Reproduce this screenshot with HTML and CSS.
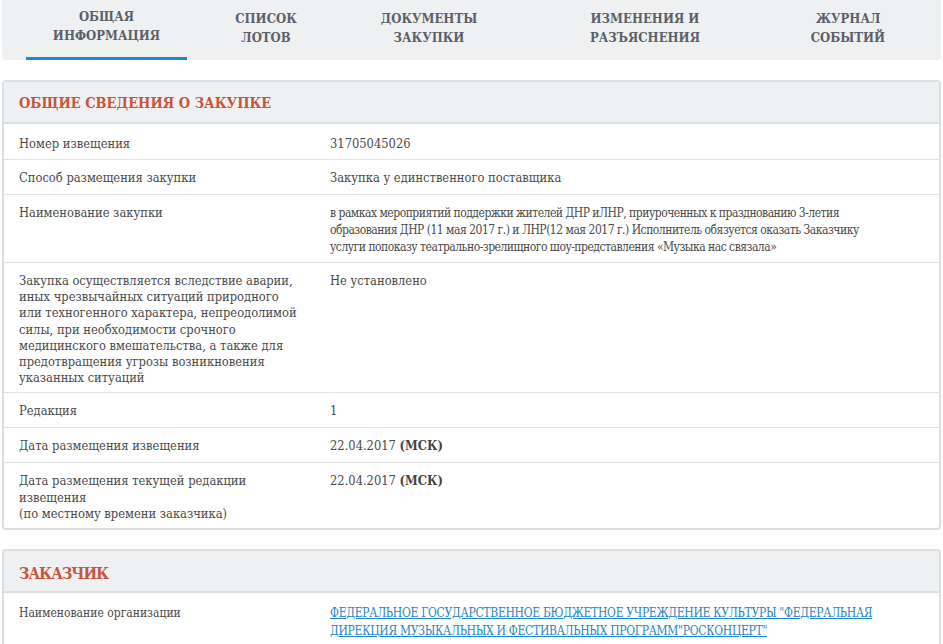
FILE: index.html
```html
<!DOCTYPE html>
<html lang="ru">
<head>
    <meta charset="UTF-8">
    <title>Общая информация о закупке</title>
    <link rel="stylesheet" href="styles.css">
</head>
<body>

    <!-- Вкладки -->
    <div class="tabs">
        <a class="tab active" href="#">Общая<br>информация</a>
        <a class="tab" href="#">Список<br>лотов</a>
        <a class="tab" href="#">Документы<br>закупки</a>
        <a class="tab" href="#">Изменения и<br>разъяснения</a>
        <a class="tab" href="#">Журнал<br>событий</a>
    </div>

    <div class="card">
        <h2 class="card-title">Общие сведения о закупке</h2>
        <div class="row">
            <div class="label">Номер извещения</div>
            <div class="value">31705045026</div>
        </div>
        <div class="row">
            <div class="label">Способ размещения закупки</div>
            <div class="value">Закупка у единственного поставщика</div>
        </div>
        <div class="row">
            <div class="label">Наименование закупки</div>
            <div class="value long">в рамках мероприятий поддержки жителей ДНР иЛНР, приуроченных к празднованию 3&#8209;летия<br>образования ДНР (11 мая 2017 г.) и ЛНР(12 мая 2017 г.) Исполнитель обязуется оказать Заказчику<br>услуги попоказу театрально-зрелищного шоу-представления «Музыка нас связала»</div>
        </div>
        <div class="row">
            <div class="label">Закупка осуществляется вследствие аварии,<br>иных чрезвычайных ситуаций природного<br>или техногенного характера, непреодолимой<br>силы, при необходимости срочного<br>медицинского вмешательства, а также для<br>предотвращения угрозы возникновения<br>указанных ситуаций</div>
            <div class="value">Не установлено</div>
        </div>
        <div class="row">
            <div class="label">Редакция</div>
            <div class="value">1</div>
        </div>
        <div class="row">
            <div class="label">Дата размещения извещения</div>
            <div class="value">22.04.2017 <b>(МСК)</b></div>
        </div>
        <div class="row">
            <div class="label">Дата размещения текущей редакции<br>извещения<br>(по местному времени заказчика)</div>
            <div class="value">22.04.2017 <b>(МСК)</b></div>
        </div>
    </div>

    <div class="card">
        <h2 class="card-title narrow">Заказчик</h2>
        <div class="row narrow">
            <div class="label">Наименование организации</div>
            <div class="value"><a href="#">ФЕДЕРАЛЬНОЕ ГОСУДАРСТВЕННОЕ БЮДЖЕТНОЕ УЧРЕЖДЕНИЕ КУЛЬТУРЫ "ФЕДЕРАЛЬНАЯ<br>ДИРЕКЦИЯ МУЗЫКАЛЬНЫХ И ФЕСТИВАЛЬНЫХ ПРОГРАММ"РОСКОНЦЕРТ"</a></div>
        </div>
    </div>

</body>
</html>
```

FILE: styles.css
```css
body {
    margin: 0;
    padding: 0 2px;
    font-family: "DejaVu Serif Condensed", "DejaVu Serif", serif;
    font-size: 12.8px;
    color: #4a4a4a;
    background: #fff;
}

.tabs {
    display: flex;
    background-color: #eef0f2;
    height: 60px;
    padding-left: 24px;
    border-radius: 0 0 4px 4px;
}

.tab {
    display: flex;
    align-items: center;
    justify-content: center;
    text-align: center;
    height: 55px;
    padding-bottom: 5px;
    text-transform: uppercase;
    text-decoration: none;
    font-weight: bold;
    font-size: 13px;
    line-height: 19px;
    color: #5b6068;
}

.tab:nth-child(1) { width: 161px; }
.tab:nth-child(2) { width: 158px; }
.tab:nth-child(3) { width: 168px; }
.tab:nth-child(4) { width: 264px; }
.tab:nth-child(5) { width: 142px; }

.tab.active {
    height: 52px;
    border-bottom: 3px solid #1a8ccc;
}

.card {
    margin-top: 20px;
    border: 2px solid #dcdfe2;
    border-radius: 4px;
}

.card + .card {
    margin-top: 19px;
}

.card-title {
    margin: 0;
    padding: 2px 15px 0;
    height: 38px;
    line-height: 38px;
    background-color: #eef0f2;
    border-bottom: 2px solid #dcdfe2;
    color: #c8553a;
    font-size: 14.5px;
    font-weight: bold;
    text-transform: uppercase;
}

.row {
    display: grid;
    grid-template-columns: 310px 1fr;
    border-top: 1px solid #e1e3e5;
    line-height: 16.2px;
    min-height: 34px;
}

.card-title + .row {
    border-top: none;
    min-height: 35px;
}

.label {
    padding: 10px 10px 6px 15px;
}

.value {
    padding: 10px 10px 6px 16px;
}

.card-title + .row .label,
.card-title + .row .value {
    padding-top: 12px;
}

.value.long {
    font-size: 12px;
    letter-spacing: -0.5px;
    line-height: 17px;
    padding-top: 10px;
}

.value b {
    font-weight: bold;
    color: #444;
}

.value a {
    color: #1f86c6;
}

/* блок заказчика на скриншоте сжат по ширине */
.row.narrow {
    line-height: 18px;
    font-size: 12px;
}

.card-title.narrow + .row .label,
.card-title.narrow + .row .value {
    padding-top: 11px;
}

.card-title.narrow {
    font-size: 16px;
    letter-spacing: -1px;
    padding-top: 5px;
    height: 35px;
    line-height: 35px;
}

.row.narrow a {
    letter-spacing: -0.3px;
}
```
